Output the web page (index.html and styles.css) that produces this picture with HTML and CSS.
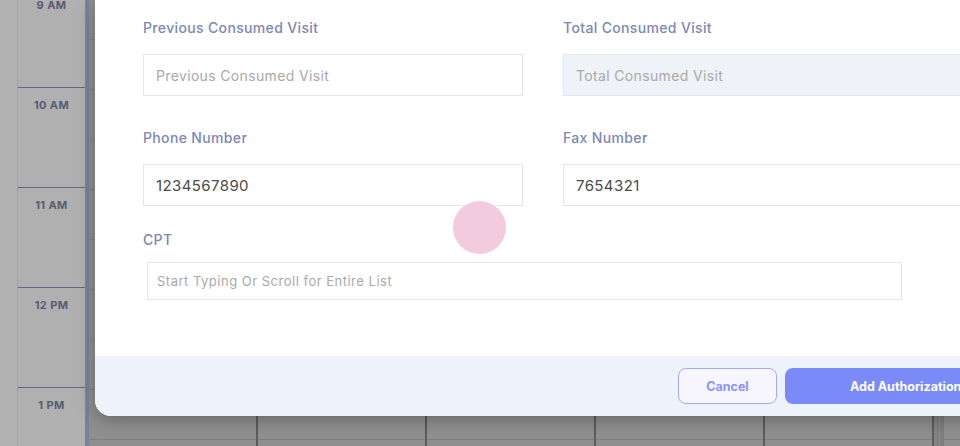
FILE: index.html
```html
<!DOCTYPE html>
<html lang="en">
<head>
<meta charset="utf-8">
<title>Add Authorization</title>
<link rel="stylesheet" href="styles.css">
</head>
<body>
<div class="calendar">
  <div class="strip"></div>
  <div class="times">
    <div class="slot"><span>9 AM</span></div>
    <div class="slot"><span>10 AM</span></div>
    <div class="slot"><span>11 AM</span></div>
    <div class="slot"><span>12 PM</span></div>
    <div class="slot"><span>1 PM</span></div>
  </div>
  <div class="bar"></div>
  <div class="grid">
    <div class="col"></div>
    <div class="col"></div>
    <div class="col"></div>
    <div class="col"></div>
    <div class="col"></div>
    <div class="col narrow"></div>
  </div>
</div>

<div class="modal">
  <div class="modal-body">
    <div class="form-grid">
      <div class="field">
        <label class="label">Previous Consumed Visit</label>
        <div class="input placeholder">Previous Consumed Visit</div>
      </div>
      <div class="field">
        <label class="label">Total Consumed Visit</label>
        <div class="input placeholder disabled">Total Consumed Visit</div>
      </div>
      <div class="field">
        <label class="label">Phone Number</label>
        <div class="input value">1234567890</div>
      </div>
      <div class="field">
        <label class="label">Fax Number</label>
        <div class="input value">7654321</div>
      </div>
    </div>
    <div class="field cpt">
      <label class="label">CPT</label>
      <div class="input cpt-input placeholder">Start Typing Or Scroll for Entire List</div>
    </div>
  </div>
  <div class="modal-footer">
    <button class="btn btn-cancel">Cancel</button>
    <button class="btn btn-primary">Add Authorization</button>
  </div>
</div>

<div class="touch"></div>
</body>
</html>
```

FILE: styles.css
```css
* { box-sizing: border-box; }

html, body {
  margin: 0;
  padding: 0;
  width: 960px;
  height: 446px;
  overflow: hidden;
}

body {
  position: relative;
  background: #9a9a9a;
  font-family: "Inter", "Noto Sans", sans-serif;
}

.calendar {
  display: flex;
  height: 446px;
}

.strip {
  width: 18px;
  background: #b3b3b3;
  border-right: 1px solid #a2a2a2;
}

.times {
  width: 67px;
  margin-top: -12px;
  background: #b0b0b0;
}

.slot {
  height: 100px;
  border-bottom: 1px solid #5f6886;
  text-align: center;
  padding-top: 5px;
}

.slot span {
  font-size: 11px;
  font-weight: 700;
  color: #555c72;
  letter-spacing: 0.4px;
}

.bar {
  width: 4px;
  background: #7d8197;
}

.grid {
  flex: 1;
  display: flex;
  background-color: #8f8f8f;
  background-image: repeating-linear-gradient(to bottom, transparent 0 39px, #808080 39px 40px, transparent 40px 50px);
}

.col {
  width: 169px;
  flex: none;
  border-right: 2px solid #5c5c5c;
}

.col.narrow {
  width: 10px;
  border-right: 1px solid #7a7a7a;
  background: repeating-linear-gradient(to right, #858585 0 3px, #7a7a7a 3px 4px);
}

/* modal */
.modal {
  position: absolute;
  left: 95px;
  top: 0;
  right: -99px;
  bottom: 30px;
  background: #ffffff;
  border-bottom-left-radius: 16px;
  overflow: hidden;
  display: flex;
  flex-direction: column;
  box-shadow: 0 4px 18px rgba(0, 0, 0, 0.28);
}

.modal-body {
  flex: 1;
  padding: 18px 0 0 48px;
}

.form-grid {
  display: grid;
  grid-template-columns: 380px 440px;
  column-gap: 40px;
  row-gap: 32px;
}

.field {
  display: flex;
  flex-direction: column;
}

.label {
  font-size: 14px;
  line-height: 20px;
  font-weight: 500;
  color: #7b88b5;
  margin-bottom: 16px;
  letter-spacing: 0.35px;
}

.input {
  height: 42px;
  border: 1px solid #e3e6ed;
  background: #ffffff;
  padding: 0 12px;
  display: flex;
  align-items: center;
  font-size: 14px;
  letter-spacing: 0.35px;
}

.input.placeholder { color: #a9a9a9; }
.input.disabled { background: #eff2f7; }
.input.value { color: #4a4a4a; font-size: 15px; letter-spacing: 0.4px; }

.cpt {
  margin-top: 24px;
}

.cpt .label { margin-bottom: 12px; }

.cpt-input {
  margin-left: 4px;
  width: 755px;
  height: 38px;
  padding-left: 9px;
  font-size: 13px;
  letter-spacing: 0.5px;
}

.modal-footer {
  height: 60px;
  background: #eef2fa;
  display: flex;
  align-items: center;
  padding-left: 583px;
  gap: 8px;
}

.btn {
  height: 36px;
  border-radius: 8px;
  font-family: inherit;
  font-size: 12.5px;
  font-weight: 700;
  letter-spacing: 0;
  cursor: pointer;
}

.btn-cancel {
  width: 99px;
  background: #f7f5fd;
  color: #8c95f1;
  border: 1.5px solid #9ea9f7;
}

.btn-primary {
  width: 250px;
  text-align: left;
  padding: 0 0 0 65px;
  background: #7a8bf8;
  color: #ffffff;
  border: none;
}

.touch {
  position: absolute;
  left: 453px;
  top: 201px;
  width: 53px;
  height: 53px;
  border-radius: 50%;
  background: #f2cbdf;
}
```
